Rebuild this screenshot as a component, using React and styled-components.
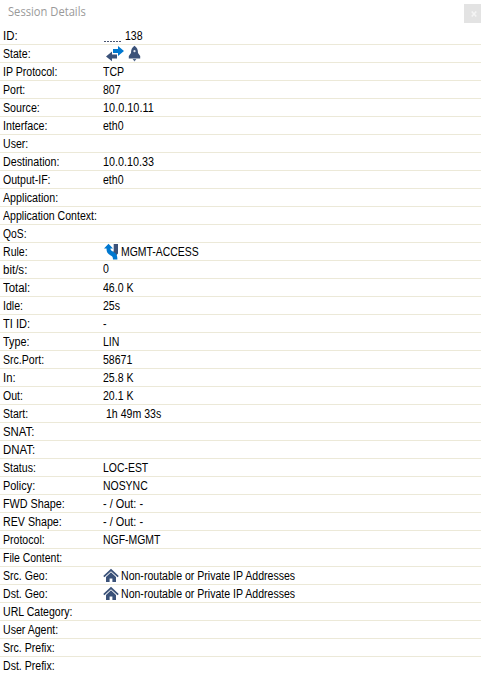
import React from "react";
import styled, { createGlobalStyle } from "styled-components";

const GlobalStyle = createGlobalStyle`
  * { box-sizing: border-box; }
  body { margin: 0; background: #fff; overflow: hidden; }
`;

const Panel = styled.main`
  width: 481px;
  height: 674px;
  overflow: hidden;
  background: #fff;
  color: #000;
  font-family: "Liberation Sans", sans-serif;
  font-size: 12px;
`;

const TitleBar = styled.header`
  display: flex;
  align-items: flex-start;
  justify-content: space-between;
  height: 27px;
  padding: 4px 0 0 8px;
`;

const Title = styled.h1`
  margin: 0;
  color: #999;
  font: 400 12px/16px "Open Sans", sans-serif;
  transform: scaleX(0.93);
  transform-origin: left;
`;

const CloseButton = styled.button`
  display: grid;
  place-items: center;
  width: 17px;
  height: 19px;
  padding: 0 0 0 2px;
  border: 0;
  background: #e3e3e3;
`;

const Row = styled.div`
  display: grid;
  grid-template-columns: 100px 1fr;
  height: 18px;
  padding-left: 3px;
  border-bottom: 1px solid #ece9d8;
`;

const Cell = styled.div`
  display: flex;
  align-items: flex-start;
  height: 17px;
  white-space: pre;
`;

const Text = styled.span`
  display: block;
  line-height: 14px;
  margin-top: ${(p) => p.$top ?? 2}px;
  margin-left: ${(p) => p.$left ?? 0}px;
  transform: scaleX(${(p) => p.$scale ?? 0.88});
  transform-origin: left;
`;

const Icon = styled.svg`
  display: block;
  flex: none;
  margin-left: ${(p) => p.$left ?? 0}px;
`;

const Dashes = styled.span`
  width: 17px;
  height: 1px;
  margin: 14px 5px 0 1px;
  background: repeating-linear-gradient(90deg, #4a5670 0 2px, transparent 2px 3px);
`;

const ArrowsIcon = () => (
  <Icon $left={3} width="18" height="17" viewBox="0 0 18 17">
    <path d="M7 4h5V1l6 5-6 5V8H7z" fill="#0078d0" />
    <path d="M11 9.400H6V6.500L0 11.400l6 4.900v-2.900h5z" fill="#3b5279" />
  </Icon>
);

const RocketIcon = () => (
  <Icon $left={4} width="13" height="17" viewBox="0 0 13 17">
    <path
      d="M6.500.800C3.900 2.500 3 5 3 8L.800 11v2.400h11.400V11L10 8c0-3-.9-5.500-3.500-7.200z"
      fill="#3b5279"
    />
    <circle cx="6.500" cy="6.200" r="1.100" fill="#dfe5ee" />
    <path d="M4.600 14h3.800l-1.900 2.600z" fill="#52698d" />
  </Icon>
);

const RuleIcon = () => (
  <Icon $left={1} width="15" height="17" viewBox="0 0 15 17">
    <path d="M9.700 1H14v9.500l-2.200 2.200-3.300-3.500 1.200-1z" fill="#3b5279" />
    <path
      d="M4.500.800 9 5.600H6.400c.1 1.600 1 2.300 3.100 3.300 2.800 1.300 3.900 3.300 3.900 7.600H9c0-2.500-.6-3.300-2.700-4.300C3.700 11 2.500 9.300 2.500 5.600H0z"
      fill="#0078d0"
    />
  </Icon>
);

const HomeIcon = () => (
  <Icon width="16" height="17" viewBox="0 0 16 17">
    <path d="M.8 9.600 8 3l7.200 6.600" fill="none" stroke="#3b5279" strokeWidth="1.700" />
    <path d="M3 9.900 8 5.300l5 4.600V15H9.400v-3.500H6.600V15H3z" fill="#3b5279" />
  </Icon>
);

const rows = [
  { label: "ID:", value: "138", icons: <Dashes />, left: -1, labelScale: 0.95 },
  { label: "State:", icons: <><ArrowsIcon /><RocketIcon /></> },
  { label: "IP Protocol:", value: "TCP" },
  { label: "Port:", value: "807" },
  { label: "Source:", value: "10.0.10.11", scale: 0.91, labelScale: 0.89 },
  { label: "Interface:", value: "eth0", labelScale: 0.89 },
  { label: "User:" },
  { label: "Destination:", value: "10.0.10.33", scale: 0.9, labelScale: 0.89 },
  { label: "Output-IF:", value: "eth0" },
  { label: "Application:", labelScale: 0.89 },
  { label: "Application Context:" },
  { label: "QoS:", labelScale: 0.86 },
  { label: "Rule:", value: "MGMT-ACCESS", icons: <RuleIcon />, left: 2, scale: 0.87 },
  { label: "bit/s:", value: "0", top: 1, labelScale: 0.96 },
  { label: "Total:", value: "46.0 K", labelScale: 0.95 },
  { label: "Idle:", value: "25s" },
  { label: "TI ID:", value: "-", labelScale: 0.92 },
  { label: "Type:", value: "LIN", labelScale: 0.9 },
  { label: "Src.Port:", value: "58671" },
  { label: "In:", value: "25.8 K", labelScale: 0.94 },
  { label: "Out:", value: "20.1 K" },
  { label: "Start:", value: "1h 49m 33s", left: 3 },
  { label: "SNAT:", labelScale: 0.95 },
  { label: "DNAT:", labelScale: 0.95 },
  { label: "Status:", value: "LOC-EST", scale: 0.87 },
  { label: "Policy:", value: "NOSYNC", scale: 0.87, labelScale: 0.91 },
  { label: "FWD Shape:", value: "- / Out: -", scale: 0.91, labelScale: 0.9 },
  { label: "REV Shape:", value: "- / Out: -", scale: 0.91, labelScale: 0.89 },
  { label: "Protocol:", value: "NGF-MGMT", scale: 0.87 },
  { label: "File Content:", labelScale: 0.87 },
  { label: "Src. Geo:", value: "Non-routable or Private IP Addresses", icons: <HomeIcon />, left: 2 },
  { label: "Dst. Geo:", value: "Non-routable or Private IP Addresses", icons: <HomeIcon />, left: 2 },
  { label: "URL Category:" },
  { label: "User Agent:" },
  { label: "Src. Prefix:" },
  { label: "Dst. Prefix:" },
];

export default function App() {
  return (
    <Panel>
      <GlobalStyle />
      <TitleBar>
        <Title>Session Details</Title>
        <CloseButton aria-label="Close">
          <svg width="6" height="6" viewBox="0 0 6 6">
            <path d="M.7.5l4.600 5M5.300.5.7 5.500" stroke="#f4f4f4" strokeWidth="1.600" />
          </svg>
        </CloseButton>
      </TitleBar>
      {rows.map((row) => (
        <Row key={row.label}>
          <Cell>
            <Text $scale={row.labelScale}>{row.label}</Text>
          </Cell>
          <Cell>
            {row.icons}
            {row.value && (
              <Text $left={row.left} $top={row.top} $scale={row.scale}>
                {row.value}
              </Text>
            )}
          </Cell>
        </Row>
      ))}
    </Panel>
  );
}
